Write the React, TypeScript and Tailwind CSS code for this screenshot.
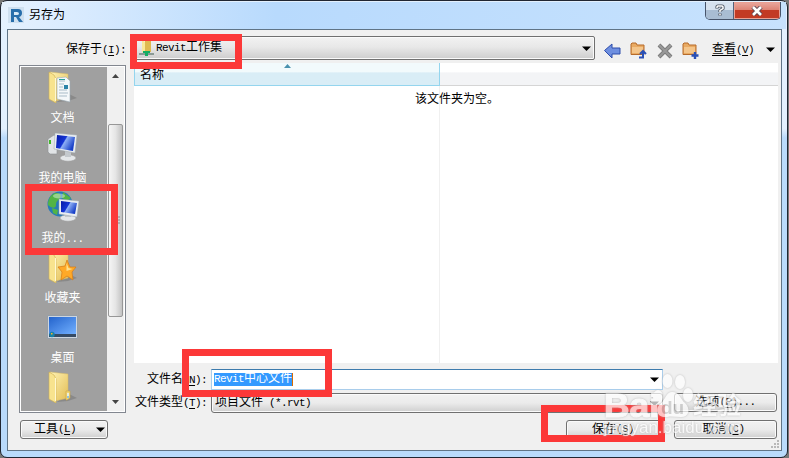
import type { ReactNode } from "react"

const SONG = "font-['Liberation_Mono','Noto_Sans_CJK_SC',monospace]"
const BUTTON = "flex items-center border border-[#707070] rounded-[3px] bg-linear-to-b from-[#f2f2f2] from-0% via-[#ebebeb] via-50% to-[#cfcfcf] shadow-[inset_0_0_0_1px_#fafafa]"

function Latin({ children }: { children: ReactNode }) {
    return <span className="text-[11px] tracking-[-0.6px] whitespace-pre">{children}</span>
}

function Key({ k }: { k: string }) {
    return (
        <span className="text-[11px] tracking-[-0.6px]">
            (<span className="underline underline-offset-2">{k}</span>)
        </span>
    )
}

function Caret() {
    return (
        <svg width="9" height="5" viewBox="0 0 9 5" className="shrink-0">
            <path d="M0 0.5h9L4.5 5z" fill="#000" />
        </svg>
    )
}

function FolderShape() {
    return (
        <>
            <defs>
                <linearGradient id="fold" x1="0" y1="0" x2="1" y2="1">
                    <stop offset="0" stopColor="#fff3b4" />
                    <stop offset="1" stopColor="#e3bd55" />
                </linearGradient>
            </defs>
            <path d="M20 22l10 5-9 3-11 1z" fill="#555" opacity=".3" />
            <path d="M3 1l18 2v24l-13 3z" fill="url(#fold)" stroke="#d7ba64" strokeWidth=".5" />
            <path d="M2 1l5 3 2 4v24l-7-4z" fill="#f8e38e" stroke="#cfae50" strokeWidth=".6" />
            <path d="M8.500 7v23" stroke="#fff8d0" strokeWidth="1" />
        </>
    )
}

function FolderIcon() {
    return (
        <svg width="32" height="32" viewBox="0 0 32 32">
            <FolderShape />
            <path d="M19 20h4v7l-3 2h-1z" fill="#f0d575" stroke="#caa443" strokeWidth=".6" />
            <path d="M21 22v5" stroke="#e8f6ff" strokeWidth="1.500" />
            <path d="M21 25v2" stroke="#3e9be0" />
        </svg>
    )
}

function DocumentsIcon() {
    return (
        <svg width="32" height="32" viewBox="0 0 32 32">
            <FolderShape />
            <path d="M10 7l9-1 4 4v21l-13-3z" fill="#f4f8fa" stroke="#9aa9b3" strokeWidth=".6" />
            <path d="M12 10h6M12 13h5M12 16h4M12 19h8M12 22h9M12 25h8" stroke="#a9bcc8" />
            <path d="M17 14h4v4h-4z" fill="#2c83a8" />
            <path d="M12 8.5h6" stroke="#27a39b" />
        </svg>
    )
}

function Screen() {
    return (
        <>
            <defs>
                <linearGradient id="glass" x1="0" y1="0" x2="1" y2=".5">
                    <stop offset="0" stopColor="#0517a5" />
                    <stop offset=".48" stopColor="#1435d5" />
                    <stop offset=".54" stopColor="#8fb0f5" />
                    <stop offset="1" stopColor="#1840c8" />
                </linearGradient>
            </defs>
            <ellipse cx="21" cy="27" rx="8" ry="3.2" fill="#e4e7e9" stroke="#999" strokeWidth=".5" />
            <path d="M18 20h6v6h-6z" fill="#c4c9cd" />
        </>
    )
}

function ComputerIcon() {
    return (
        <svg width="32" height="32" viewBox="0 0 32 32">
            <Screen />
            <path d="M1 8l6-4 3 1v18l-7 0-2-2z" fill="#e1e4e6" stroke="#8d9295" strokeWidth=".6" />
            <path d="M2 9h2v4H2z" fill="#42b928" />
            <path d="M8 2l22 2-2 18-21-4z" fill="#e9edf0" stroke="#9ba4aa" strokeWidth=".5" />
            <path d="M10 4l18 2-2 14-17-3z" fill="url(#glass)" />
        </svg>
    )
}

function NetworkIcon() {
    return (
        <svg width="32" height="32" viewBox="0 0 32 32">
            <circle cx="13" cy="13" r="12.500" fill="#277ab8" />
            <path d="M8 2c5 0 7 2 5 5s-4 3-4 7-5 3-8 0C1 9 3 4 8 2zM16 1l8 6-4 3-5-3zM5 17l6 2-1 5-4-2z" fill="#52b445" />
            <ellipse cx="12" cy="5" rx="6" ry="2.5" fill="#fff" opacity=".4" />
            <Screen />
            <path d="M12 8l20 2-2 16-18-3z" fill="#e9edf0" stroke="#9ba4aa" strokeWidth=".5" />
            <path d="M14 10l16 2-2 11-14-2z" fill="url(#glass)" />
        </svg>
    )
}

function FavoritesIcon() {
    return (
        <svg width="32" height="32" viewBox="0 0 32 32">
            <FolderShape />
            <path d="M20 9l3 7 6 0-4 5 1 8-6-4-6 4 1-8-4-5 7-1z" fill="#ffa927" stroke="#d57a16" strokeWidth=".7" />
            <path d="M19.500 12l2 5 4 1-6 2z" fill="#ffe08b" />
        </svg>
    )
}

function DesktopIcon() {
    return (
        <svg width="32" height="32" viewBox="0 0 32 32">
            <defs>
                <linearGradient id="desk" x1="0" y1="0" x2="1" y2="1">
                    <stop offset="0" stopColor="#2363cc" />
                    <stop offset="1" stopColor="#72b0ff" />
                </linearGradient>
            </defs>
            <path d="M.5 4.5h30v23H.5z" fill="#ced6df" stroke="#949da6" />
            <path d="M2 6h27v17H2z" fill="url(#desk)" />
            <path d="M2 23h27v3H2z" fill="#354b65" />
            <circle cx="5" cy="23.5" r="2.7" fill="#1682a8" />
            <path d="M4 22h1.500v1.500H4z" fill="#f6b02a" />
        </svg>
    )
}

const places = [
    { label: "文档", icon: <DocumentsIcon /> },
    { label: "我的电脑", icon: <ComputerIcon /> },
    { label: <>我的<Latin>...</Latin></>, icon: <NetworkIcon /> },
    { label: "收藏夹", icon: <FavoritesIcon /> },
    { label: "桌面", icon: <DesktopIcon /> },
    { label: "", icon: <FolderIcon /> },
]

function TitleBar() {
    return (
        <div className="flex h-[27px] items-start bg-linear-to-r from-[#e5f1fe] from-0% via-[#b8dafd] via-35% to-[#c7e2fd]">
            <svg width="16" height="16" viewBox="0 0 16 16" className="mt-[5px] ml-[6px]">
                <path d="M0 0h16v16H0z" fill="#cfe0f0" />
                <path d="M3 2h7q4 0 4 4 0 3-3 4l4 5h-4L8 10H6v5H3z" fill="#286eab" />
                <path d="M6 5h3q2 0 2 1.500T9 8H6z" fill="#d9eaf7" />
            </svg>
            <span className="mt-[5px] ml-[5px] leading-[18px]">另存为</span>
            <div className="mr-[5px] ml-auto flex h-[18px] overflow-hidden rounded-b-[5px] border border-t-0 border-[#47546a]">
                <div className="flex w-[28px] items-center justify-center border-r border-[#53617a] bg-linear-to-b from-[#d6e1ee] from-45% to-[#a9bdd3] to-50%">
                    <svg width="10" height="13" viewBox="0 0 10 13" fill="none">
                        <path d="M2 4.500V3q0-1 1-1h4q1 0 1 1v1.500L5 6.500V8M5 9.500v2" stroke="#4b5360" strokeWidth="3.200" />
                        <path d="M2 4V3q0-1 1-1h4q1 0 1 1v1.500L5 6.500V8M5 9.800v1.500" stroke="#fff" strokeWidth="1.500" />
                    </svg>
                </div>
                <div className="flex w-[46px] items-center justify-center bg-linear-to-b from-[#e9a99f] from-0% via-[#dd8475] via-45% to-[#c23a24] to-50% shadow-[inset_0_0_0_1px_#e9a093]">
                    <svg width="12" height="10" viewBox="0 0 12 10">
                        <path d="M2 1l8 8M10 1L2 9" stroke="#5e4450" strokeWidth="4.500" />
                        <path d="M2 1l8 8M10 1L2 9" stroke="#fff" strokeWidth="2.600" />
                    </svg>
                </div>
            </div>
        </div>
    )
}

function OrangeFolder({ children }: { children: ReactNode }) {
    return (
        <svg width="17" height="17" viewBox="0 0 17 17">
            <path d="M1 12.500V2l1-1h4l1 2h7v9.500z" fill="#e9aa62" stroke="#b66b2a" />
            <path d="M2 5h11v6H2z" fill="#f4c58a" />
            {children}
        </svg>
    )
}

function Toolbar() {
    return (
        <div className="flex h-[33px] items-start">
            <span className="mt-[11px] ml-[58px] w-[65px] leading-[18px] whitespace-nowrap">保存于<Key k="I" /><Latin>:</Latin></span>
            <div className="mt-[6px] flex h-[24px] w-[464px] items-center rounded-[2px] border border-[#707070] bg-linear-to-b from-[#f2f2f2] from-0% via-[#e8e8e8] via-45% to-[#cdcdcd] pr-[3px] pl-[7px] shadow-[inset_0_0_0_1px_#fafafa]">
                <svg width="15" height="16" viewBox="0 0 15 16">
                    <path d="M3 0l3 2v11l-3-1z" fill="#f9e899" />
                    <path d="M6 1h6v11H6z" fill="#dfb94f" />
                    <path d="M0 14h15" stroke="#8a9a95" strokeWidth="2" />
                    <path d="M4 11h7v2H9v3H6v-3H4z" fill="#13ad63" />
                </svg>
                <span className="-mt-[1px] ml-[2px]"><Latin>Revit</Latin>工作集</span>
                <span className="ml-auto flex"><Caret /></span>
            </div>
            <div className="mt-[12px] ml-[9px] flex items-start">
                <svg width="17" height="17" viewBox="0 0 17 17">
                    <path d="M.5 8.500L8 2v4h8v6H8v4z" fill="#6e8fe0" stroke="#2d4cab" />
                </svg>
                <span className="ml-[9px]"><OrangeFolder><path d="M9 15.500h4V10m-3 2l3-3 3 3" fill="none" stroke="#284fb6" strokeWidth="2" /></OrangeFolder></span>
                <svg width="16" height="17" viewBox="0 0 16 17" className="ml-[10px]">
                    <path d="M2 3l12 12M14 3L2 15" stroke="#7c7c7c" strokeWidth="4" />
                    <path d="M2 3l12 12M14 3L2 15" stroke="#999" strokeWidth="2" />
                </svg>
                <span className="ml-[9px]"><OrangeFolder><path d="M13 10v7M9.500 13.500h7" stroke="#284fb6" strokeWidth="2.400" /></OrangeFolder></span>
            </div>
            <span className="mt-[11px] ml-[13px] leading-[18px] whitespace-nowrap"><span className="underline underline-offset-2">查看</span><Key k="V" /></span>
            <span className="mt-[17px] mr-[6px] ml-auto"><Caret /></span>
        </div>
    )
}

function Places() {
    return (
        <div className="mt-[2px] flex h-[348px] w-[107px] border border-[#828790] bg-white p-px">
            <div className="w-[86px] overflow-hidden bg-[#a0a0a0] pt-[4px] text-center text-white">
                {places.map((p, i) => (
                    <div key={i} className="h-[60px]">
                        <div className="ml-[26px]">{p.icon}</div>
                        <div className="mt-[6px] -ml-[3px] leading-[20px]">{p.label}</div>
                    </div>
                ))}
            </div>
            <div className="flex flex-1 flex-col items-center bg-[#f0f0f0] py-[7px]">
                <svg width="7" height="4"><path d="M0 4h7L3.500 0z" fill="#444" /></svg>
                <div className="mt-[46px] flex h-[193px] w-[15px] items-center justify-center rounded-[2px] border border-[#979797] bg-linear-to-r from-[#f5f5f5] via-[#e5e5e5] to-[#c3c3c3]">
                    <svg width="8" height="9"><path d="M0 1h8M0 4h8M0 7h8" stroke="#888" /></svg>
                </div>
                <svg width="7" height="4" className="mt-auto"><path d="M0 0h7L3.500 4z" fill="#444" /></svg>
            </div>
        </div>
    )
}

function FileList() {
    return (
        <div className="flex h-[300px] w-[644px] flex-col bg-white">
            <div className="flex h-[23px] shrink-0">
                <div className="relative w-[306px] border-r border-b border-l border-[#94d5ee] bg-linear-to-b from-[#f2fafc] from-40% to-[#d9edf6] to-45% pt-[3px] pl-[5px] leading-[20px]">
                    名称
                    <svg width="7" height="4" className="absolute top-[1px] left-[149px]"><path d="M0 4h7L3.500 0z" fill="#4a91ae" /></svg>
                </div>
                <div className="flex-1 border-b border-[#d5d5d5] bg-linear-to-b from-white from-40% to-[#f3f4f6] to-45%" />
            </div>
            <div className="w-[306px] flex-1 border-r border-[#f0f0f0] pt-[5px] pl-[281px] leading-[18px] whitespace-nowrap">该文件夹为空。</div>
        </div>
    )
}

function FileFields() {
    return (
        <div className="flex">
            <div>
                <div className="mt-[6px] flex h-[21px] items-center">
                    <span className="w-[77px] pl-[13px] whitespace-nowrap">文件名<Key k="N" /><Latin>:</Latin></span>
                    <div className="flex h-[21px] w-[452px] items-center border border-[#a9cdeb] border-t-[#3d7bad] bg-white pr-[3px] pl-[2px]">
                        <span className="border-r border-[#d96c00] bg-[#3399ff] leading-[13px] text-white"><Latin>Revit</Latin>中心文件</span>
                        <span className="ml-auto flex"><Caret /></span>
                    </div>
                </div>
                <div className="mt-[3px] flex h-[20px] items-center">
                    <span className="w-[77px] pl-px whitespace-nowrap">文件类型<Key k="T" /><Latin>:</Latin></span>
                    <div className={`${BUTTON} h-[20px] w-[452px] pr-[3px] pl-[3px]`}>
                        <span>项目文件<Latin> (*.rvt)</Latin></span>
                        <span className="ml-auto flex"><Caret /></span>
                    </div>
                </div>
            </div>
            <div className={`${BUTTON} mt-[30px] ml-[11px] h-[19px] w-[103px] justify-center`}>选项<Key k="P" /><Latin>...</Latin></div>
        </div>
    )
}

function Watermark() {
    return (
        <div className="absolute top-[372px] left-[602px] h-[70px] w-[145px] opacity-70">
            <svg width="145" height="70" viewBox="0 0 145 70" fill="#fff" className="[filter:drop-shadow(0_0_1px_#aaa)]">
                <text x="2" y="45" fontFamily="Liberation Sans" fontWeight="bold" fontSize="34" textLength="55" lengthAdjust="spacingAndGlyphs" stroke="#fff">Bai</text>
                <ellipse cx="56" cy="25" rx="5" ry="7" />
                <ellipse cx="65.500" cy="9" rx="5" ry="7" />
                <ellipse cx="78" cy="10" rx="5" ry="7" />
                <ellipse cx="86" cy="23" rx="5" ry="7" />
                <path d="M70 20c8 0 8 7 13 11 6 6 4 14-4 14-5 0-9-1-14 0-10 1-13-8-6-14 5-4 5-11 11-11z" />
                <text x="59" y="42" fontFamily="Liberation Sans" fontWeight="bold" fontSize="19" fill="#c4c4c4">du</text>
                <text x="91" y="42" fontFamily="Noto Sans CJK SC" fontWeight="bold" fontSize="24">经验</text>
                <text x="2" y="61" fontFamily="Liberation Sans" fontSize="17" textLength="137">jingyan.baidu.com</text>
            </svg>
        </div>
    )
}

export default function App() {
    return (
        <div className={`${SONG} relative h-[458px] w-[789px] overflow-hidden bg-[#777] text-[12px] text-black`}>
            <div className="h-[458px] w-[788px] rounded-[7px] border border-[#202632] bg-linear-to-b from-[#e3f0fd] from-28% to-[#b9dafb] to-30% p-px">
                <TitleBar />
                <div className="ml-[5px] h-[422px] w-[775px] border border-[#607486] bg-[#f0f0f0]">
                    <Toolbar />
                    <div className="flex">
                        <div className="ml-[11px]">
                            <Places />
                            <div className={`${BUTTON} mt-[7px] ml-px h-[19px] w-[88px] pr-[2px] pl-[13px]`}>
                                工具<Key k="L" />
                                <span className="ml-auto flex"><Caret /></span>
                            </div>
                        </div>
                        <div className="ml-[8px]">
                            <FileList />
                            <FileFields />
                            <div className="mt-[7px] flex justify-end">
                                <div className={`${BUTTON} h-[19px] w-[98px] justify-center pr-[4px]`}>保存<Key k="S" /></div>
                                <div className={`${BUTTON} mr-px ml-[10px] h-[19px] w-[103px] justify-center pr-[4px]`}>取消<Key k="C" /></div>
                            </div>
                        </div>
                    </div>
                </div>
            </div>
            <svg width="8" height="8" className="absolute top-[440px] left-[771px]">
                <path d="M6 0h2v2H6zM3 3h2v2H3zM6 3h2v2H6zM0 6h2v2H0zM3 6h2v2H3zM6 6h2v2H6z" fill="#b8b8b8" />
            </svg>
            <div className="absolute top-[34px] left-[130px] h-[35px] w-[112px] border-[7px] border-[#fc3838]" />
            <div className="absolute top-[184px] left-[25px] h-[71px] w-[93px] border-[7px] border-[#fc3838]" />
            <div className="absolute top-[349px] left-[182px] h-[48px] w-[150px] border-[7px] border-[#fc3838]" />
            <div className="absolute top-[405px] left-[541px] h-[37px] w-[124px] border-[7px] border-[#fc3838]" />
            <Watermark />
        </div>
    )
}
